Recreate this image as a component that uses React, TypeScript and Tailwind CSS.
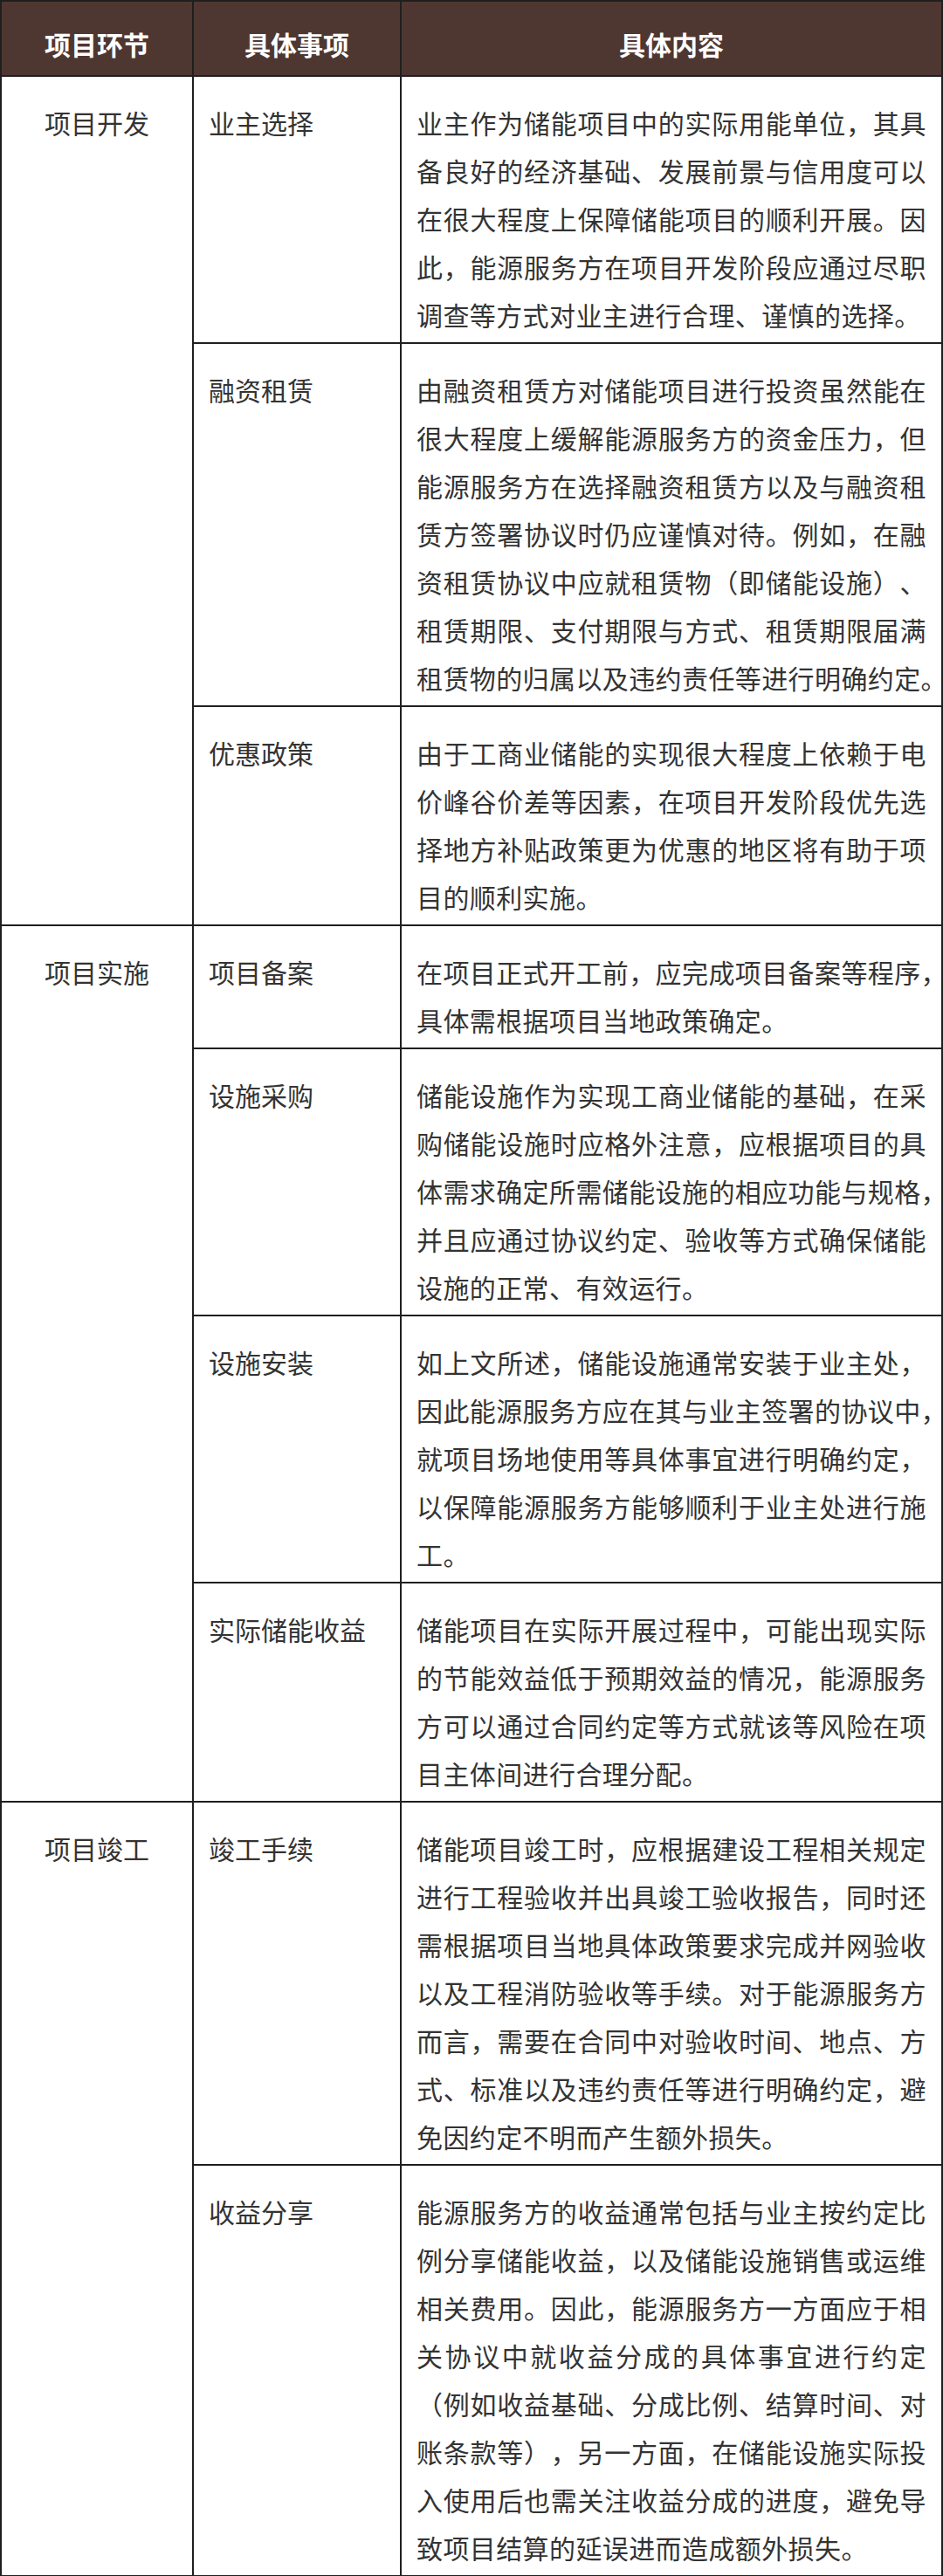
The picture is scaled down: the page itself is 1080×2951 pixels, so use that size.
import clsx from "clsx";

type Item = { name: string; lines: string[] };
type Section = { stage: string; items: Item[] };

const SECTIONS: Section[] = [
  {
    stage: "项目开发",
    items: [
      {
        name: "业主选择",
        lines: [
          "业主作为储能项目中的实际用能单位，其具",
          "备良好的经济基础、发展前景与信用度可以",
          "在很大程度上保障储能项目的顺利开展。因",
          "此，能源服务方在项目开发阶段应通过尽职",
          "调查等方式对业主进行合理、谨慎的选择。",
        ],
      },
      {
        name: "融资租赁",
        lines: [
          "由融资租赁方对储能项目进行投资虽然能在",
          "很大程度上缓解能源服务方的资金压力，但",
          "能源服务方在选择融资租赁方以及与融资租",
          "赁方签署协议时仍应谨慎对待。例如，在融",
          "资租赁协议中应就租赁物（即储能设施）、",
          "租赁期限、支付期限与方式、租赁期限届满",
          "租赁物的归属以及违约责任等进行明确约定。",
        ],
      },
      {
        name: "优惠政策",
        lines: [
          "由于工商业储能的实现很大程度上依赖于电",
          "价峰谷价差等因素，在项目开发阶段优先选",
          "择地方补贴政策更为优惠的地区将有助于项",
          "目的顺利实施。",
        ],
      },
    ],
  },
  {
    stage: "项目实施",
    items: [
      {
        name: "项目备案",
        lines: [
          "在项目正式开工前，应完成项目备案等程序，",
          "具体需根据项目当地政策确定。",
        ],
      },
      {
        name: "设施采购",
        lines: [
          "储能设施作为实现工商业储能的基础，在采",
          "购储能设施时应格外注意，应根据项目的具",
          "体需求确定所需储能设施的相应功能与规格，",
          "并且应通过协议约定、验收等方式确保储能",
          "设施的正常、有效运行。",
        ],
      },
      {
        name: "设施安装",
        lines: [
          "如上文所述，储能设施通常安装于业主处，",
          "因此能源服务方应在其与业主签署的协议中，",
          "就项目场地使用等具体事宜进行明确约定，",
          "以保障能源服务方能够顺利于业主处进行施",
          "工。",
        ],
      },
      {
        name: "实际储能收益",
        lines: [
          "储能项目在实际开展过程中，可能出现实际",
          "的节能效益低于预期效益的情况，能源服务",
          "方可以通过合同约定等方式就该等风险在项",
          "目主体间进行合理分配。",
        ],
      },
    ],
  },
  {
    stage: "项目竣工",
    items: [
      {
        name: "竣工手续",
        lines: [
          "储能项目竣工时，应根据建设工程相关规定",
          "进行工程验收并出具竣工验收报告，同时还",
          "需根据项目当地具体政策要求完成并网验收",
          "以及工程消防验收等手续。对于能源服务方",
          "而言，需要在合同中对验收时间、地点、方",
          "式、标准以及违约责任等进行明确约定，避",
          "免因约定不明而产生额外损失。",
        ],
      },
      {
        name: "收益分享",
        lines: [
          "能源服务方的收益通常包括与业主按约定比",
          "例分享储能收益，以及储能设施销售或运维",
          "相关费用。因此，能源服务方一方面应于相",
          "关协议中就收益分成的具体事宜进行约定",
          "（例如收益基础、分成比例、结算时间、对",
          "账条款等），另一方面，在储能设施实际投",
          "入使用后也需关注收益分成的进度，避免导",
          "致项目结算的延误进而造成额外损失。",
        ],
      },
    ],
  },
];

function Lines({ lines }: { lines: string[] }) {
  return (
    <>
      {lines.map((line, i) => (
        <div
          key={i}
          className={clsx(
            "whitespace-nowrap",
            i < lines.length - 1 && "text-justify [text-align-last:justify]"
          )}
        >
          {line}
        </div>
      ))}
    </>
  );
}

export default function App() {
  return (
    <div className="min-h-screen bg-white">
      <div className="w-[1080px] border-2 border-[#1f1f1f] font-['Noto_Sans_CJK_SC',sans-serif] text-[30px] leading-[55px] text-[#333] [text-spacing-trim:space-all]">
        <div className="grid h-[86px] grid-cols-[220px_238px_1fr] border-b-2 border-[#1f1f1f] bg-[#4f3731] font-bold text-white">
          <div className="flex items-center justify-center border-r-2 border-[#1f1f1f] pt-[12px]">
            项目环节
          </div>
          <div className="flex items-center justify-center border-r-2 border-[#1f1f1f] pt-[12px]">
            具体事项
          </div>
          <div className="flex items-center justify-center pt-[12px]">具体内容</div>
        </div>

        {SECTIONS.map((section, si) => (
          <div
            key={section.stage}
            className={clsx(
              "flex",
              si < SECTIONS.length - 1 && "border-b-2 border-[#1f1f1f]"
            )}
          >
            <div className="w-[220px] shrink-0 border-r-2 border-[#1f1f1f] pt-[25px] text-center">
              {section.stage}
            </div>
            <div className="min-w-0 flex-1">
              {section.items.map((item, ii) => (
                <div
                  key={item.name}
                  className={clsx(
                    "grid grid-cols-[238px_1fr]",
                    ii < section.items.length - 1 && "border-b-2 border-[#1f1f1f]"
                  )}
                >
                  <div className="border-r-2 border-[#1f1f1f] pb-[4px] pl-[17px] pt-[25px]">
                    {item.name}
                  </div>
                  <div className="min-w-0 pb-[4px] pl-[17px] pr-[17px] pt-[25px] tracking-[0.4px]">
                    <Lines lines={item.lines} />
                  </div>
                </div>
              ))}
            </div>
          </div>
        ))}
      </div>
    </div>
  );
}
